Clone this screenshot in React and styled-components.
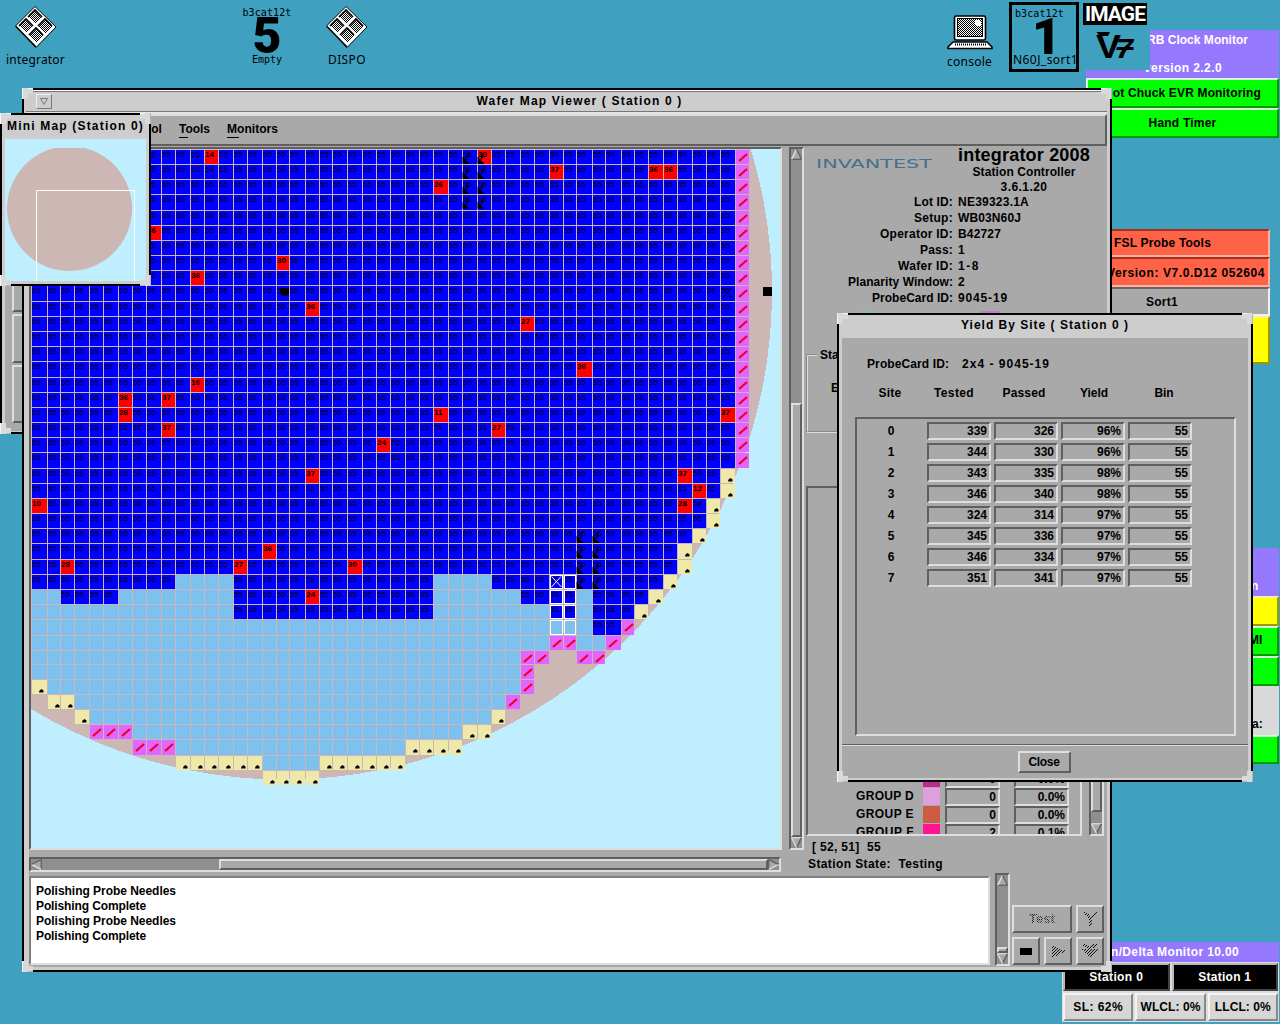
import React, { useLayoutEffect, useRef, useState } from "react";
import styled, { createGlobalStyle, css } from "styled-components";

const C = {
  desk: "#3fa0c0",
  face: "#a9a9a9",
  frame: "#cdcdcd",
  light: "#dedede",
  dark: "#5f5f5f",
  trough: "#8f8f8f",
  wafer: "#cdb7b5",
  sky: "#bfefff",
  purple: "#9678ff",
};

const Global = createGlobalStyle`
  * { box-sizing: border-box; }
  html, body { margin: 0; background: ${C.desk}; overflow: hidden; }
  body { font: bold 12px/16px "Liberation Sans", Arial, sans-serif; color: #000; }
  svg { display: block; }
`;

const raised = (n = 2) => css`
  border: ${n}px solid;
  border-color: ${C.light} ${C.dark} ${C.dark} ${C.light};
`;
const sunken = (n = 2) => css`
  border: ${n}px solid;
  border-color: ${C.dark} ${C.light} ${C.light} ${C.dark};
`;

const Desktop = styled.div`
  position: relative;
  width: 1280px;
  height: 1024px;
  overflow: hidden;
  background: ${C.desk};
`;

/* Text set to a given advance width by tracking. */
const FitText = styled.span`
  display: inline-block;
  white-space: pre;
`;
function Fit({ w, children }) {
  const ref = useRef(null);
  const [ls, setLs] = useState(0);
  useLayoutEffect(() => {
    const natural = ref.current.getBoundingClientRect().width;
    setLs((w - natural) / String(children).length);
  }, [w, children]);
  return <FitText ref={ref} style={{ letterSpacing: ls }}>{children}</FitText>;
}

/* ---------- window chrome ---------- */
const WindowBox = styled.section`
  position: absolute;
  left: ${(p) => p.$x}px;
  top: ${(p) => p.$y}px;
  width: ${(p) => p.$w}px;
  height: ${(p) => p.$h}px;
  border: 2px solid #000;
  background: ${C.frame};
  display: flex;
  flex-direction: column;
  padding: ${(p) => p.$pad || "0 3px 3px"};
`;
const Corner = styled.i`
  position: absolute;
  width: 11px;
  height: 11px;
  ${(p) => p.$v}: -2px;
  ${(p) => p.$h}: -2px;
  &::before, &::after {
    content: "";
    position: absolute;
    ${(p) => p.$v}: 0;
    ${(p) => p.$h}: 0;
    background: #d9d9d9;
    border: 0 solid #f6f6f6;
  }
  &::before {
    width: 11px;
    height: 5px;
    border-${(p) => (p.$v === "top" ? "top" : "bottom")}: 1px solid ${(p) => (p.$v === "top" ? "#f6f6f6" : "#b5b5b5")};
  }
  &::after {
    width: 5px;
    height: 11px;
    border-${(p) => (p.$h === "left" ? "left" : "right")}: 1px solid ${(p) => (p.$h === "left" ? "#f6f6f6" : "#b5b5b5")};
  }
`;
function Window({ x, y, w, h, pad, children }) {
  return (
    <WindowBox $x={x} $y={y} $w={w} $h={h} $pad={pad}>
      {children}
      <Corner $v="top" $h="left" />
      <Corner $v="top" $h="right" />
      <Corner $v="bottom" $h="left" />
      <Corner $v="bottom" $h="right" />
    </WindowBox>
  );
}
const Title = styled.div`
  flex: none;
  height: ${(p) => p.$h}px;
  text-align: center;
  line-height: ${(p) => p.$lh || 20}px;
  white-space: nowrap;
  overflow: hidden;
`;
const MainTitle = styled.header`
  flex: none;
  height: 24px;
  margin: 0 0 0 -3px;
  display: grid;
  grid-template-columns: 16px 1fr;
  align-items: start;
  padding: 2px 0 0 10px;
  text-align: center;
  line-height: 16px;
  border-top: 1px solid #fff;
  box-shadow: inset 0 1px #777, inset 0 -2px #e4e4e4, inset 0 -3px #777;
`;
const MenuButton = styled.div`
  width: 16px;
  height: 15px;
  margin-top: 1px;
  border: 1px solid;
  border-color: #eee #777 #777 #eee;
  display: grid;
  place-items: center;
`;

/* ---------- main window parts ---------- */
const MenuBar = styled.nav`
  flex: none;
  height: 32px;
  display: flex;
  gap: 17px;
  padding: 5px 0 0 88px;
  background: ${C.face};
  ${raised(2)}
`;
const MenuItem = styled.span`
  height: 17px;
  line-height: 16px;
  background: linear-gradient(#000, #000) 0 100% / ${(p) => p.$u}px 1px no-repeat;
  white-space: nowrap;
`;
const Body = styled.div`
  flex: 1;
  display: flex;
  flex-direction: column;
  min-height: 0;
  background: ${C.face};
`;
const Upper = styled.div`
  height: 727px;
  display: flex;
  padding-top: 1px;
`;
const MapColumn = styled.div`
  width: 752px;
  margin-right: 8px;
  display: flex;
  flex-direction: column;
  gap: 7px;
`;
const MapView = styled.div`
  width: 753px;
  height: 703px;
  background: ${C.sky};
  overflow: hidden;
  ${sunken(2)}
`;
const Bar = styled.div`
  display: flex;
  flex-direction: ${(p) => (p.$row ? "row" : "column")};
  width: ${(p) => p.$w}px;
  height: ${(p) => p.$h}px;
  background: ${C.trough};
  flex: none;
  ${sunken(2)}
`;
const Thumb = styled.div`
  flex: ${(p) => (p.$len ? "none" : "1")};
  ${(p) => (p.$row ? "width" : "height")}: ${(p) => (p.$len ? p.$len + "px" : "auto")};
  margin: ${(p) => (p.$row ? `0 0 0 ${p.$off}px` : `${p.$off}px 0 0 0`)};
  background: ${C.face};
  ${raised(2)}
`;
const ThumbGap = styled.div`
  flex: 1;
`;
const ArrowSvg = styled.svg`
  flex: none;
  transform: rotate(${(p) => p.$turn}deg);
`;
function Arrow({ turn = 0, size = 12 }) {
  const flip = turn === 180 || turn === 90;
  return (
    <ArrowSvg $turn={turn} width={size} height={size} viewBox="0 0 12 12">
      <path d="M6 0.5 L11.5 11 H0.5 Z" fill={C.face} />
      <path d="M0.5 11.2 H11.5" stroke={turn === 180 ? C.light : C.dark} strokeWidth="1.4" />
      <path d="M6 0.5 L0.7 11" stroke={flip ? C.dark : C.light} strokeWidth="1.6" />
      <path d="M6 0.5 L11.3 11" stroke={flip ? C.light : C.dark} strokeWidth="1.4" />
    </ArrowSvg>
  );
}
const Side = styled.aside`
  width: 302px;
  height: 726px;
  display: flex;
  flex-direction: column;
`;
const Brand = styled.div`
  height: 47px;
  display: grid;
  grid-template-columns: 138px 164px;
  flex: none;
`;
const Logo = styled.svg`
  margin: 8px 0 0 12px;
  text {
    font: 400 12.5px "DejaVu Sans", sans-serif;
    fill: #44708f;
  }
`;
const Product = styled.div`
  width: 164px;
  text-align: center;
  line-height: 16px;
`;
const ProductName = styled.div`
  font-size: 18px;
  line-height: 17px;
`;
const ProductLine = styled.div`
  line-height: ${(p) => p.$lh}px;
`;
const InfoRow = styled.div`
  flex: none;
  height: 16px;
  display: grid;
  grid-template-columns: 149px 1fr;
  column-gap: 5px;
  & > :first-child { text-align: right; }
`;
const Legend = styled.div`
  flex: none;
  display: flex;
  height: 14px;
  gap: 109px;
  margin: 5px 0 0 54px;
`;
const LegendChip = styled.i`
  width: ${(p) => p.$w}px;
  height: 12px;
  background: ${(p) => p.$c};
`;
const GroupBox = styled.fieldset`
  flex: none;
  height: 86px;
  width: 270px;
  margin: 22px 0 53px 2px;
  padding: 17px 0 0 23px;
  border: 2px groove #ddd;
  legend { padding: 0 3px; margin-left: -14px; }
`;
const GroupList = styled.div`
  height: 350px;
  display: flex;
  gap: 7px;
`;
const GroupFrame = styled.div`
  width: 276px;
  height: 350px;
  margin-left: 2px;
  overflow: hidden;
  display: flex;
  flex-direction: column;
  justify-content: flex-start;
  padding-top: 282px;
  ${sunken(2)}
`;
const GroupRow = styled.div`
  flex: none;
  height: 18px;
  display: grid;
  grid-template-columns: 106px 9px 17px 5px 55px 14px 55px;
  line-height: 17px;
  & > :first-child { text-align: right; }
`;
const Swatch = styled.i`
  height: 17px;
  width: 17px;
  background: ${(p) => p.$c};
`;
const Field = styled.div`
  height: 18px;
  line-height: 15px;
  text-align: right;
  padding-right: 2px;
  ${sunken(2)}
`;
const Status = styled.div`
  padding: 3px 0 0 4px;
  line-height: 17px;
  white-space: pre;
  & > :first-child { padding-left: 4px; }
`;
const Lower = styled.div`
  flex: 1;
  display: flex;
`;
const Log = styled.div`
  width: 961px;
  height: 89px;
  margin: 3px 5px 0 0;
  background: #fff;
  padding: 6px 5px 0;
  line-height: 15px;
  border: 2px solid;
  border-color: #808080 ${C.light} ${C.light} #808080;
`;
const Controls = styled.div`
  display: grid;
  grid-template-columns: 28px 28px 28px;
  grid-auto-rows: 28px;
  gap: 4px;
  padding: 32px 0 0 2px;
`;
const Key = styled.button`
  grid-column: span ${(p) => p.$span || 1};
  font: inherit;
  padding: 0;
  display: grid;
  place-items: center;
  background: ${C.face};
  color: #000;
  ${raised(2)}
`;

/* ---------- wafer map ---------- */
const COLS = [32,47,60,74,89,103,118,132,146,161,175,190,204,218,233,247,262,276,289,305,319,332,347,362,376,390,405,419,433,448,462,477,491,505,520,534,549,563,576,592,605,621,634,648,663,677,692,706,720,735,749];
const ROWS = [149,164,179,194,210,225,240,255,270,285,301,316,331,346,361,377,392,407,422,437,452,468,483,498,513,528,543,559,574,589,604,619,635,650,664,679,694,709,724,739,755,770,785];
const FAILS = {
  "0,12": 14, "0,31": 30, "1,36": 37, "1,43": 36, "1,44": 36, "2,28": 26, "5,8": 36, "7,17": 30,
  "8,11": 36, "10,19": 36, "11,34": 27, "14,38": 36, "15,11": 16, "16,6": 36, "16,9": 37,
  "17,6": 26, "17,28": 11, "17,48": 37, "18,9": 37, "18,32": 27, "19,24": 24, "21,19": 37,
  "21,45": 37, "22,46": 12, "23,45": 28, "23,0": 10, "26,16": 36, "27,2": 28, "27,14": 27,
  "27,22": 30, "29,19": 24,
};
/* Runs of cells per row: [kind, first column, last column]. b tested, u untested, p skipped, y edge. */
const runs = (r) => {
  if (r <= 20) return [["b", 0, 48], ["p", 49, 49]];
  if (r <= 27) {
    const edge = [48, 48, 47, 47, 46, 45, 45][r - 21];
    return [["b", 0, edge - 1], ["y", edge, edge]];
  }
  return {
    28: [["b",0,9],["u",10,13],["b",14,27],["u",28,31],["b",32,43],["y",44,44]],
    29: [["u",0,1],["b",2,5],["u",6,13],["b",14,27],["u",28,33],["b",34,37],["u",38,38],["b",39,42],["y",43,43]],
    30: [["u",0,13],["b",14,27],["u",28,35],["b",36,37],["u",38,38],["b",39,41],["y",42,42]],
    31: [["u",0,38],["b",39,40],["p",41,41]],
    32: [["u",0,35],["p",36,37],["u",38,39],["p",40,40]],
    33: [["u",0,33],["p",34,35],["p",38,39]],
    34: [["u",0,33],["p",34,34]],
    35: [["y",0,0],["u",1,33],["p",34,34]],
    36: [["y",1,2],["u",3,32],["p",33,33]],
    37: [["y",3,3],["u",4,31],["y",32,32]],
    38: [["p",4,6],["u",7,29],["y",30,31]],
    39: [["p",7,9],["u",10,25],["y",26,29]],
    40: [["y",10,15],["u",16,19],["y",20,25]],
    41: [["y",16,19]],
  }[r];
};
const FILL = { b: "#0000ff", u: "#7ec0ee", p: "#e066ff", y: "#eee8aa", f: "#ff0000" };
const Bin = styled.text`
  font: ${(p) => (p.$fail ? 700 : 400)} 8px "Liberation Sans", Arial, sans-serif;
  fill: #000;
`;

function Die({ r, c, kind }) {
  const x = COLS[c] + (c ? 1 : 0);
  const y = ROWS[r] + 1;
  const w = COLS[c + 1] - x;
  const h = ROWS[r + 1] - y;
  const fail = FAILS[`${r},${c}`];
  return (
    <g>
      <rect x={x} y={y} width={w} height={h} fill={FILL[fail ? "f" : kind]} />
      {kind === "b" && <Bin $fail={!!fail} x={x} y={y + 7}>{fail || 55}</Bin>}
      {kind === "p" && (
        <path
          d={`M${x + 3} ${y + 11} L${x + 11} ${y + 4}`}
          stroke="#f00020" strokeWidth="2.2" shapeRendering="auto"
        />
      )}
      {kind === "y" && <path d={`M${x + 7} ${y + 12.5} l0.5 -2 l2 -1.6 l2 1.6 v2 z`} shapeRendering="auto" />}
    </g>
  );
}

const arrows = [];
for (let k = 0; k < 4; k++) {
  arrows.push([k, 30], [k, 31], [25 + k, 38], [25 + k, 39]);
}

function WaferMap() {
  const dies = [];
  for (let r = 0; r < ROWS.length - 1; r++)
    for (const [kind, a, b] of runs(r))
      for (let c = a; c <= b; c++) dies.push(<Die key={`${r},${c}`} r={r} c={c} kind={kind} />);
  return (
    <svg width="749" height="699" viewBox="31 149 749 699" shapeRendering="crispEdges">
      <ellipse cx="284" cy="291.5" rx="488" ry="488" fill={C.wafer} />
      {dies}
      {arrows.map(([r, c]) => (
        <path
          key={`${r}-${c}`}
          d={`M${COLS[c] + 1} ${ROWS[r] + 8} V${ROWS[r] + 14.5} H${COLS[c] + 7} L${COLS[c] + 4} ${ROWS[r] + 12} L${COLS[c] + 3} ${ROWS[r] + 11} Z M${COLS[c] + 3} ${ROWS[r] + 11.5} L${COLS[c] + 6} ${ROWS[r] + 8} V${ROWS[r] + 4}`}
          fill="#000"
          stroke="#000"
          strokeWidth="0.9"
          shapeRendering="auto"
        />
      ))}
      {[28, 29, 30, 31].map((r) =>
        [36, 37].map((c) => (
          <rect
            key={`${r}${c}`}
            x={COLS[c] + 1.5} y={ROWS[r] + 1.5}
            width={COLS[c + 1] - COLS[c] - 2} height={ROWS[r + 1] - ROWS[r] - 2}
            fill="none" stroke="#fff" strokeWidth="1"
          />
        ))
      )}
      <path d="M551.5 576.5 L561.5 587 M561 576.5 L551.5 587" stroke="#fff" strokeWidth="1" shapeRendering="auto" />
      <path d="M723 288 L732 298 M731 288 L723 298" stroke="#00003c" strokeWidth="1" shapeRendering="auto" />
      <path d="M280 288 h9 v6 l-3 2 h-3 l-3 -3 z" shapeRendering="auto" />
      <rect x="763" y="287" width="9" height="9" />
    </svg>
  );
}

/* ---------- yield dialog ---------- */
const DialogBody = styled.div`
  flex: 1;
  display: flex;
  flex-direction: column;
  background: ${C.face};
  margin-bottom: -1px;
`;
const CardLine = styled.div`
  display: flex;
  gap: 13px;
  padding: 18px 0 0 25px;
  height: 46px;
`;
const HeadRow = styled.div`
  display: grid;
  grid-template-columns: 64px 64px 76px 64px 76px;
  padding: 1px 0 0 16px;
  height: 33px;
  text-align: center;
`;
const SiteList = styled.div`
  width: 381px;
  height: 319px;
  margin: 0 0 8px 13px;
  padding-top: 3px;
  ${sunken(2)}
`;
const SiteRow = styled.div`
  display: grid;
  grid-template-columns: 67px 64px 64px 64px 64px;
  column-gap: 3px;
  height: 21px;
  line-height: 19px;
  & > :first-child { text-align: center; padding-left: 1px; }
`;
const DialogFooter = styled.div`
  flex: 1;
  border-top: 1px solid ${C.dark};
  box-shadow: inset 0 1px ${C.light};
  display: flex;
  justify-content: center;
  align-items: flex-start;
  padding-top: 6px;
`;
const CloseButton = styled(Key)`
  width: 53px;
  height: 22px;
  margin-right: 2px;
`;
const SITES = [
  [339, 326, 96], [344, 330, 96], [343, 335, 98], [346, 340, 98],
  [324, 314, 97], [345, 336, 97], [346, 334, 97], [351, 341, 97],
];

/* ---------- side tool panels ---------- */
const Panel = styled.div`
  position: absolute;
  left: ${(p) => p.$x}px;
  top: ${(p) => p.$y}px;
  width: ${(p) => p.$w}px;
  display: flex;
  flex-direction: column;
`;
const PanelHead = styled.div`
  flex: none;
  height: ${(p) => p.$h}px;
  background: ${C.purple};
  color: #fff;
  padding-left: ${(p) => p.$pl}px;
  padding-top: ${(p) => p.$pt}px;
  line-height: ${(p) => p.$lh || 16}px;
`;
const tones = {
  green: ["#00ff00", "#d8f8d8", "#009a00"],
  red: ["#ff6347", "#ffb0a0", "#a03020"],
  gray: ["#a9a9a9", "#f0f0f0", "#666"],
  yellow: ["#ffff00", "#f2f2a0", "#9a9a00"],
  black: ["#000", "#b8b8b8", "#444"],
  pale: ["#d6d6d6", "#f4f4f4", "#888"],
};
const PanelButton = styled.div`
  flex: ${(p) => (p.$grow ? 1 : "none")};
  height: ${(p) => p.$h}px;
  line-height: ${(p) => p.$h - 5 + (p.$dy || 0)}px;
  padding-left: ${(p) => p.$pl || 0}px;
  text-align: ${(p) => (p.$pl ? "left" : "center")};
  white-space: pre;
  background: ${(p) => tones[p.$tone][0]};
  border: 2px solid;
  border-color: ${(p) => {
    const [, l, d] = tones[p.$tone];
    return p.$in ? `${d} ${l} ${l} ${d}` : `${l} ${d} ${d} ${l}`;
  }};
  color: ${(p) => (p.$tone === "black" ? "#fff" : "#000")};
`;
const PanelText = styled.div`
  height: ${(p) => p.$h}px;
  padding: ${(p) => p.$pad};
  background: #d9d9d9;
`;
const Cells = styled.div`
  display: flex;
  gap: 2px;
  padding: 1px;
  background: #dcdcdc;
`;

/* ---------- desktop icons ---------- */
const Icon = styled.div`
  position: absolute;
  left: ${(p) => p.$x}px;
  top: ${(p) => p.$y}px;
  width: ${(p) => p.$w}px;
  display: flex;
  flex-direction: column;
  align-items: center;
  font: 400 12px/16px "Noto Sans", "DejaVu Sans", sans-serif;
`;
const IconLabel = styled.div`
  margin-top: ${(p) => p.$mt}px;
  white-space: nowrap;
`;
const SmallMono = styled.div`
  font: 400 10px/9px "DejaVu Sans Mono", monospace;
`;
const Huge = styled.div`
  font: 900 50px/38px Roboto, "Liberation Sans", sans-serif;
`;
const Framed = styled(Icon)`
  height: 70px;
  border: 3px solid #000;
  padding-top: 4px;
  align-items: flex-start;
  overflow: hidden;
`;
const Indent = styled.div`
  padding-left: ${(p) => p.$l}px;
  height: ${(p) => p.$h}px;
  white-space: nowrap;
`;
const ImageTile = styled.div`
  position: absolute;
  left: 1083px;
  top: 0;
  width: 67px;
  height: 70px;
  padding-top: 3px;
  background: ${C.desk};
`;
const ImageBadge = styled.div`
  width: 64px;
  height: 22px;
  background: #000;
  color: #fff;
  text-align: center;
  font: bold 21px/23px Roboto, "Liberation Sans", sans-serif;
`;
const VMark = styled.svg`
  margin: 3px 0 0 10px;
  text { font-family: "Liberation Sans", sans-serif; font-weight: bold; }
`;

function DiamondIcon() {
  return (
    <svg width="42" height="42" viewBox="0 0 42 42">
      <defs>
        <pattern id="dither" width="2" height="2" patternUnits="userSpaceOnUse">
          <rect width="2" height="2" fill="#fff" />
          <rect width="1" height="1" /><rect x="1" y="1" width="1" height="1" />
        </pattern>
      </defs>
      <path d="M20 0.5 L41 21 L21 41.5 L0.5 20 Z" fill="#fff" stroke="#000" />
      <path d="M1 20.5 L21 41" fill="none" stroke="#000" strokeWidth="1.5" />
      <g fill="url(#dither)" shapeRendering="crispEdges">
        <path d="M20 4 L27 11 L20 18 L13 11 Z" />
        <path d="M30 13 L37 20 L30 27 L23 20 Z" />
        <path d="M11 13 L18 20 L11 27 L4 20 Z" />
        <path d="M21 22 L28 29 L21 36 L14 29 Z" />
      </g>
      <path
        d="M13 11 L20 4 L27 11 M4 20 L11 13 L18 20 M14 29 L21 22 L28 29 M23 20 L30 13 L37 20"
        fill="none" stroke="#000" strokeWidth="1.7"
      />
    </svg>
  );
}
function LaptopIcon() {
  return (
    <svg width="46" height="35" viewBox="0 0 46 35">
      <rect x="7.5" y="1" width="31" height="24" rx="1.5" fill="#fff" stroke="#000" strokeWidth="1.6" />
      <rect x="10.5" y="3.5" width="25" height="18" fill="url(#dither)" stroke="#000" shapeRendering="crispEdges" />
      <path d="M28 5 h5 v1 h1 v4 h-1 v1 h-4 v-1 h-1 z" fill="#fff" />
      <path d="M6 27 H40 L45 32 V33.5 H1 V32 Z" fill="#fff" stroke="#000" strokeWidth="1.6" />
      <path d="M8 29.5 H39" stroke="#000" strokeWidth="2" strokeDasharray="1 1" />
    </svg>
  );
}
const Hatch = styled.svg.attrs({ width: 18, height: 18, viewBox: "0 0 18 18" })``;
function HatchIcon({ shape }) {
  return (
    <Hatch>
      <defs>
        <pattern id={`h-${shape}`} width="3" height="3" patternUnits="userSpaceOnUse">
          <path d="M2 0h1v1H2z M1 1h1v1H1z M0 2h1v1H0z" fill="#111" />
        </pattern>
      </defs>
      <path
        fill={`url(#h-${shape})`}
        shapeRendering="crispEdges"
        d={{
          play: "M3 3 L17 9 L3 16 Z",
          up: "M1 2 H5 L9 6 L13 2 H17 L11 9 V16 H8 V9 Z",
          down: "M1 2 H5 L9 5 L13 2 H17 V4 L9 7 L1 4 Z M1 7 H17 L9 16 Z",
        }[shape]}
      />
    </Hatch>
  );
}
const Stipple = styled.span`
  display: block;
  background: repeating-conic-gradient(${C.face} 0 25%, #222 0 50%) 0 0 / 2px 2px;
  background-clip: text;
  color: transparent;
  font-weight: bold;
  font-size: 13px;
`;

const LegacyBody = styled.div`
  flex: 1;
  display: flex;
  flex-direction: column;
  gap: 2px;
  background: ${C.face};
  padding: 20px 0 8px 7px;
`;
const LegacyKey = styled.div`
  height: ${(p) => p.$h}px;
  ${raised(2)}
`;

const MiniBody = styled.div`
  flex: 1;
  background: ${C.sky};
  overflow: hidden;
`;

const INFO = [
  ["Lot ID:", "NE39323.1A", 39, 71], ["Setup:", "WB03N60J", 39, 63], ["Operator ID:", "B42727", 73, 43],
  ["Pass:", "1", 33, 7], ["Wafer ID:", "1-8", 55, 22], ["Planarity Window:", "2", 105, 7],
  ["ProbeCard ID:", "9045-19", 81, 50],
];
const GROUPS = [
  ["GROUP C", "#c02890", "0", "0.0%"], ["GROUP D", "#dda0dd", "0", "0.0%"],
  ["GROUP E", "#cd5c45", "0", "0.0%"], ["GROUP F", "#ff1493", "2", "0.1%"],
];

export default function App() {
  return (
    <Desktop>
      <Global />

      <Icon $x={2} $y={6} $w={67}><DiamondIcon /><IconLabel $mt={4}><Fit w={59}>integrator</Fit></IconLabel></Icon>
      <Icon $x={234} $y={8} $w={66}>
        <SmallMono><Fit w={49}>b3cat12t</Fit></SmallMono>
        <Huge>5</Huge>
        <SmallMono><Fit w={30}>Empty</Fit></SmallMono>
      </Icon>
      <Icon $x={314} $y={6} $w={66}><DiamondIcon /><IconLabel $mt={4}><Fit w={38}>DISPO</Fit></IconLabel></Icon>
      <Icon $x={936} $y={15} $w={67}><LaptopIcon /><IconLabel $mt={4}><Fit w={45}>console</Fit></IconLabel></Icon>
      <Framed $x={1009} $y={2} $w={70}>
        <Indent $l={3} $h={9}><SmallMono><Fit w={49}>b3cat12t</Fit></SmallMono></Indent>
        <Indent $l={20} $h={34}><Huge>1</Huge></Indent>
        <Indent $l={1} $h={16}><Fit w={65}>N60J_sort1</Fit></Indent>
      </Framed>

      <Panel $x={1086} $y={30} $w={193}>
        <PanelHead $h={48} $pl={61} $pt={2} $lh={28}>
          <HeadLine $h={28}><Fit w={101}>RB Clock Monitor</Fit></HeadLine>
          <HeadLine $h={16} $shift={-3}><Fit w={78}>version 2.2.0</Fit></HeadLine>
        </PanelHead>
        <PanelButton $tone="green" $h={30} $dy={2}><Fit w={157}>Hot Chuck EVR Monitoring</Fit></PanelButton>
        <PanelButton $tone="green" $h={30} $dy={1}><Fit w={68}>Hand Timer</Fit></PanelButton>
      </Panel>
      <ImageTile>
        <ImageBadge><Fit w={60}>IMAGE</Fit></ImageBadge>
        <VMark width="46" height="36" viewBox="0 0 46 36">
          <text x="3" y="30" fontSize="34" textLength="25" lengthAdjust="spacingAndGlyphs">V</text>
          <text x="23" y="30" fontSize="27" fontStyle="italic" textLength="17" lengthAdjust="spacingAndGlyphs">7</text>
          <path d="M3.5 4 H17 L15 8 H6.5 Z M24 19 H40.5 V22 H23 Z" />
        </VMark>
      </ImageTile>

      <Panel $x={1086} $y={229} $w={184}>
        <PanelButton $tone="red" $in $h={28} $dy={1} $pl={26}><Fit w={97}>FSL Probe Tools</Fit></PanelButton>
        <PanelButton $tone="red" $in $h={30} $dy={3} $pl={19}><Fit w={158}>Version: V7.0.D12 052604</Fit></PanelButton>
        <PanelButton $tone="gray" $in $h={29} $dy={3} $pl={58}><Fit w={32}>Sort1</Fit></PanelButton>
        <PanelButton $tone="yellow" $h={48} />
      </Panel>
      <Panel $x={1200} $y={548} $w={79}>
        <PanelHead $h={48} $pl={51} $pt={30}>n</PanelHead>
        <PanelButton $tone="yellow" $h={30} />
        <PanelButton $tone="green" $h={30} $pl={47}>MI</PanelButton>
        <PanelButton $tone="green" $h={30} />
        <PanelText $h={49} $pad="30px 0 0 52px">a:</PanelText>
        <PanelButton $tone="green" $h={29} />
      </Panel>
      <Panel $x={1062} $y={942} $w={217}>
        <PanelHead $h={20} $pl={49} $pt={2}><Fit w={128}>n/Delta Monitor 10.00</Fit></PanelHead>
        <Cells>
          <PanelButton $grow $tone="black" $h={28} $dy={2}><Fit w={54}>Station 0</Fit></PanelButton>
          <PanelButton $grow $tone="black" $h={28} $dy={2}><Fit w={53}>Station 1</Fit></PanelButton>
        </Cells>
        <Cells>
          <PanelButton $grow $tone="pale" $h={28} $dy={2}><Fit w={50}>SL: 62%</Fit></PanelButton>
          <PanelButton $grow $tone="pale" $h={28} $dy={2}><Fit w={60}>WLCL: 0%</Fit></PanelButton>
          <PanelButton $grow $tone="pale" $h={28} $dy={2}><Fit w={56}>LLCL: 0%</Fit></PanelButton>
        </Cells>
      </Panel>

      <Window x={0} y={240} w={120} h={194}>
        <LegacyBody>
          <LegacyKey $h={50} />
          <LegacyKey $h={49} />
          <LegacyKey $h={58} />
        </LegacyBody>
      </Window>

      <Window x={22} y={88} w={1090} h={884} pad="0 3px 3px 5px">
        <MainTitle>
          <MenuButton>
            <svg width="8" height="7" viewBox="0 0 8 7"><path d="M0.5 0.5 H7.5 L4 6.5 Z" fill="none" stroke="#777" /></svg>
          </MenuButton>
          <span><Fit w={206}>Wafer Map Viewer ( Station 0 )</Fit></span>
        </MainTitle>
        <MenuBar>
          <MenuItem $u={9}><Fit w={43}>Control</Fit></MenuItem>
          <MenuItem $u={9}><Fit w={31}>Tools</Fit></MenuItem>
          <MenuItem $u={12}><Fit w={51}>Monitors</Fit></MenuItem>
        </MenuBar>
        <Body>
          <Upper>
            <MapColumn>
              <MapView><WaferMap /></MapView>
              <Bar $row $w={752} $h={15}>
                <Arrow turn={-90} size={11} />
                <Thumb $row $off={177} />
                <Arrow turn={90} size={11} />
              </Bar>
            </MapColumn>
            <Bar $w={15} $h={703}>
              <Arrow size={11} />
              <Thumb $off={243} />
              <Arrow turn={180} size={11} />
            </Bar>
            <Side>
              <Brand>
                <Logo width="118" height="16" viewBox="0 0 118 16">
                  <text x="0" y="12.5" textLength="116" lengthAdjust="spacingAndGlyphs">INVANTEST</text>
                </Logo>
                <Product>
                  <ProductName><Fit w={132}>integrator 2008</Fit></ProductName>
                  <ProductLine $lh={17}><Fit w={103}>Station Controller</Fit></ProductLine>
                  <ProductLine $lh={12}><Fit w={47}>3.6.1.20</Fit></ProductLine>
                </Product>
              </Brand>
              {INFO.map(([k, v, a, b]) => (
                <InfoRow key={k}><span><Fit w={a}>{k}</Fit></span><span><Fit w={b}>{v}</Fit></span></InfoRow>
              ))}
              <Legend><LegendChip $w={14} $c="#8fb4c0" /><LegendChip $w={18} $c="#c07ad0" /></Legend>
              <GroupBox><legend>Statistics</legend>Edge</GroupBox>
              <GroupList>
                <GroupFrame>
                  {GROUPS.map(([n, c, a, b]) => (
                    <GroupRow key={n}>
                      <span><Fit w={58}>{n}</Fit></span><i /><Swatch $c={c} /><i />
                      <Field>{a}</Field><i /><Field>{b}</Field>
                    </GroupRow>
                  ))}
                </GroupFrame>
                <Bar $w={15} $h={350}>
                  <Arrow size={11} />
                  <Thumb $off={0} $len={313} />
                  <ThumbGap />
                  <Arrow turn={180} size={11} />
                </Bar>
              </GroupList>
              <Status>
                <div><Fit w={69}>{"[ 52, 51]  55"}</Fit></div>
                <div><Fit w={135}>{"Station State:  Testing"}</Fit></div>
              </Status>
            </Side>
          </Upper>
          <Lower>
            <Log>
              <div><Fit w={140}>Polishing Probe Needles</Fit></div>
              <div><Fit w={110}>Polishing Complete</Fit></div>
              <div><Fit w={140}>Polishing Probe Needles</Fit></div>
              <div><Fit w={110}>Polishing Complete</Fit></div>
            </Log>
            <Bar $w={15} $h={93}>
              <Arrow size={11} />
              <Thumb $off={61} $len={6} />
              <Arrow turn={180} size={11} />
            </Bar>
            <Controls>
              <Key $span={2}><Stipple>Test</Stipple></Key>
              <Key><HatchIcon shape="up" /></Key>
              <Key><svg width="12" height="7"><rect width="12" height="7" /></svg></Key>
              <Key><HatchIcon shape="play" /></Key>
              <Key><HatchIcon shape="down" /></Key>
            </Controls>
          </Lower>
        </Body>
      </Window>

      <Window x={0} y={113} w={151} h={173}>
        <Title $h={24} $lh={22}><Fit w={137}>Mini Map (Station 0)</Fit></Title>
        <MiniBody>
          <svg width="142" height="143" viewBox="5 139 142 143">
            <path d="M54 148 H85 A62.5 62.5 0 1 1 54 148 Z" fill={C.wafer} />
            <path d="M36.5 284 V190.5 H134.5 V284" fill="none" stroke="#fff" />
          </svg>
        </MiniBody>
      </Window>

      <Window x={837} y={313} w={416} h={469}>
        <Title $h={23}><Fit w={168}>Yield By Site ( Station 0 )</Fit></Title>
        <DialogBody>
          <CardLine><Fit w={82}>ProbeCard ID:</Fit><Fit w={88}>2x4 - 9045-19</Fit></CardLine>
          <HeadRow>
            <span><Fit w={23}>Site</Fit></span><span><Fit w={40}>Tested</Fit></span>
            <span><Fit w={43}>Passed</Fit></span><span><Fit w={28}>Yield</Fit></span><span><Fit w={19}>Bin</Fit></span>
          </HeadRow>
          <SiteList>
            {SITES.map(([t, p, y], i) => (
              <SiteRow key={i}>
                <span>{i}</span>
                <Field>{t}</Field><Field>{p}</Field><Field>{y}%</Field><Field>55</Field>
              </SiteRow>
            ))}
          </SiteList>
          <DialogFooter><CloseButton><Fit w={31}>Close</Fit></CloseButton></DialogFooter>
        </DialogBody>
      </Window>
    </Desktop>
  );
}

const HeadLine = styled.div`
  height: ${(p) => p.$h}px;
  line-height: 16px;
  margin-left: ${(p) => p.$shift || 0}px;
`;
